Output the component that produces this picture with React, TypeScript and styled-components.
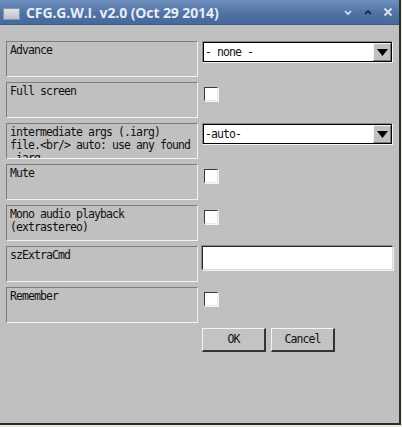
import React from 'react';
import styled, { createGlobalStyle } from 'styled-components';

const GlobalStyle = createGlobalStyle`
    html, body {
        margin: 0;
        padding: 0;
        background-color: #e6e9dc;
    }
`

const Window = styled.div`
    width: 401px;
    height: 425px;
    box-sizing: border-box;
    display: flex;
    flex-direction: column;
    background-color: #c0c0c0;
    border-right: 2px solid #2b2f2c;
    border-bottom: 2px solid #2b2f2c;
    overflow: hidden;
`

const TitleBar = styled.div`
    height: 25px;
    flex-shrink: 0;
    display: flex;
    align-items: center;
    background: linear-gradient(#6f8fbe, #4f73a4 55%, #46689a);
    border-bottom: 1px solid #3b5a88;
    box-sizing: border-box;
    padding: 0 5px 0 3px;
`

const AppIcon = styled.div`
    width: 17px;
    height: 12px;
    margin-top: 3px;
    margin-right: 6px;
    background: linear-gradient(#dfe3ea, #b9bfca);
    border: 1px solid #8a93a6;
    box-sizing: border-box;
`

const TitleText = styled.div`
    flex: 1;
    color: #e8edf5;
    font-family: "Open Sans", "DejaVu Sans", sans-serif;
    font-weight: 700;
    font-size: 14px;
    letter-spacing: -0.1px;
`

const TitleButtons = styled.div`
    display: flex;
    gap: 8px;
    align-items: center;
`

const TitleBtn = styled.svg`
    width: 12px;
    height: 12px;
    display: block;
`

const Body = styled.div`
    padding: 16px 0 0 6px;
    display: flex;
    flex-direction: column;
    gap: 5px;
`

const Row = styled.div`
    display: flex;
    gap: 4px;
`

const LabelBox = styled.div`
    width: 192px;
    height: 36px;
    box-sizing: border-box;
    border-top: 1px solid #7d7d7d;
    border-left: 1px solid #7d7d7d;
    border-bottom: 1px solid #f2f2f2;
    border-right: 1px solid #f2f2f2;
    padding: 2px 3px 0;
    overflow: hidden;
`

const Mono = styled.span`
    font-family: "DejaVu Sans Mono", "Liberation Mono", monospace;
    font-size: 11.5px;
    letter-spacing: -0.92px;
    line-height: 13px;
    color: #111;
`

const LabelText = styled(Mono)`
    display: block;
    white-space: pre-wrap;
`

const ControlCell = styled.div<{ $top: number }>`
    padding-top: ${p => p.$top}px;
`

const Combo = styled.div`
    width: 191px;
    height: 22px;
    box-sizing: border-box;
    border-top: 1px solid #8a8a8a;
    border-left: 1px solid #8a8a8a;
    border-bottom: 1px solid #f4f4f4;
    border-right: 1px solid #f4f4f4;
    display: flex;
`

const ComboInner = styled.div`
    flex: 1;
    display: flex;
    border: 1px solid #000;
    background-color: #fff;
`

const ComboValue = styled(Mono)`
    flex: 1;
    padding-left: 1px;
    line-height: 18px;
`

const ComboArrow = styled.div`
    width: 18px;
    box-sizing: border-box;
    background-color: #c0c0c0;
    border-top: 1px solid #f4f4f4;
    border-left: 1px solid #f4f4f4;
    border-bottom: 1px solid #7d7d7d;
    border-right: 1px solid #7d7d7d;
    display: flex;
    align-items: center;
    justify-content: center;
`

const Check = styled.div`
    width: 14px;
    height: 14px;
    margin-left: 2px;
    box-sizing: border-box;
    background-color: #fff;
    border-top: 1px solid #3a3a3a;
    border-left: 1px solid #3a3a3a;
    border-bottom: 1px solid #e8e8e8;
    border-right: 1px solid #e8e8e8;
    box-shadow: 1px 1px 0 #f4f4f4;
`

const TextInput = styled.div`
    width: 191px;
    height: 24px;
    box-sizing: border-box;
    background-color: #fff;
    border-top: 1px solid #2a2a2a;
    border-left: 1px solid #2a2a2a;
    border-bottom: 1px solid #d8d8d8;
    border-right: 1px solid #d8d8d8;
    box-shadow: 1px 1px 0 #f2f2f2, -1px -1px 0 #8a8a8a;
`

const ButtonRow = styled.div`
    display: flex;
    gap: 5px;
    padding-left: 196px;
`

const Button = styled.div`
    width: 64px;
    height: 24px;
    box-sizing: border-box;
    background-color: #c3c3c3;
    border-top: 1px solid #f4f4f4;
    border-left: 1px solid #f4f4f4;
    border-bottom: 2px solid #333;
    border-right: 2px solid #333;
    display: flex;
    align-items: center;
    justify-content: center;
`

const Arrow = () => (
    <svg width="11" height="7" viewBox="0 0 11 7">
        <path d="M0 0 H11 L5.5 7 Z" fill="#000" />
    </svg>
)

type Kind = 'combo' | 'check' | 'text'

interface Field {
    label: string
    kind: Kind
    value?: string
}

const fields: Field[] = [
    { label: 'Advance', kind: 'combo', value: '- none -' },
    { label: 'Full screen', kind: 'check' },
    { label: 'intermediate args (.iarg)\nfile.<br/> auto: use any found\n.iarg', kind: 'combo', value: '-auto-' },
    { label: 'Mute', kind: 'check' },
    { label: 'Mono audio playback\n(extrastereo)', kind: 'check' },
    { label: 'szExtraCmd', kind: 'text' },
    { label: 'Remember', kind: 'check' },
]

const offsets: Record<Kind, number> = { combo: 0, check: 5, text: 0 }

const App = () => {
    return (
        <>
            <GlobalStyle />
            <Window>
                <TitleBar>
                    <AppIcon />
                    <TitleText>CFG.G.W.I. v2.0 (Oct 29 2014)</TitleText>
                    <TitleButtons>
                        <TitleBtn viewBox="0 0 12 12">
                            <path d="M3 5 L6 8 L9 5" stroke="#dfe6f2" strokeWidth="1.6" fill="none" />
                        </TitleBtn>
                        <TitleBtn viewBox="0 0 12 12">
                            <path d="M3 8 L6 5 L9 8" stroke="#1d2c44" strokeWidth="1.8" fill="none" />
                        </TitleBtn>
                        <TitleBtn viewBox="0 0 12 12">
                            <path d="M2.5 2.5 L9.5 9.5 M9.5 2.5 L2.5 9.5" stroke="#dfe6f2" strokeWidth="1.8" fill="none" />
                        </TitleBtn>
                    </TitleButtons>
                </TitleBar>
                <Body>
                    {fields.map(f => (
                        <Row key={f.label}>
                            <LabelBox>
                                <LabelText>{f.label}</LabelText>
                            </LabelBox>
                            <ControlCell $top={offsets[f.kind]}>
                                {f.kind === 'combo' && (
                                    <Combo>
                                        <ComboInner>
                                            <ComboValue>{f.value}</ComboValue>
                                            <ComboArrow><Arrow /></ComboArrow>
                                        </ComboInner>
                                    </Combo>
                                )}
                                {f.kind === 'check' && <Check />}
                                {f.kind === 'text' && <TextInput />}
                            </ControlCell>
                        </Row>
                    ))}
                    <ButtonRow>
                        <Button><Mono>OK</Mono></Button>
                        <Button><Mono>Cancel</Mono></Button>
                    </ButtonRow>
                </Body>
            </Window>
        </>
    )
}

export default App;
